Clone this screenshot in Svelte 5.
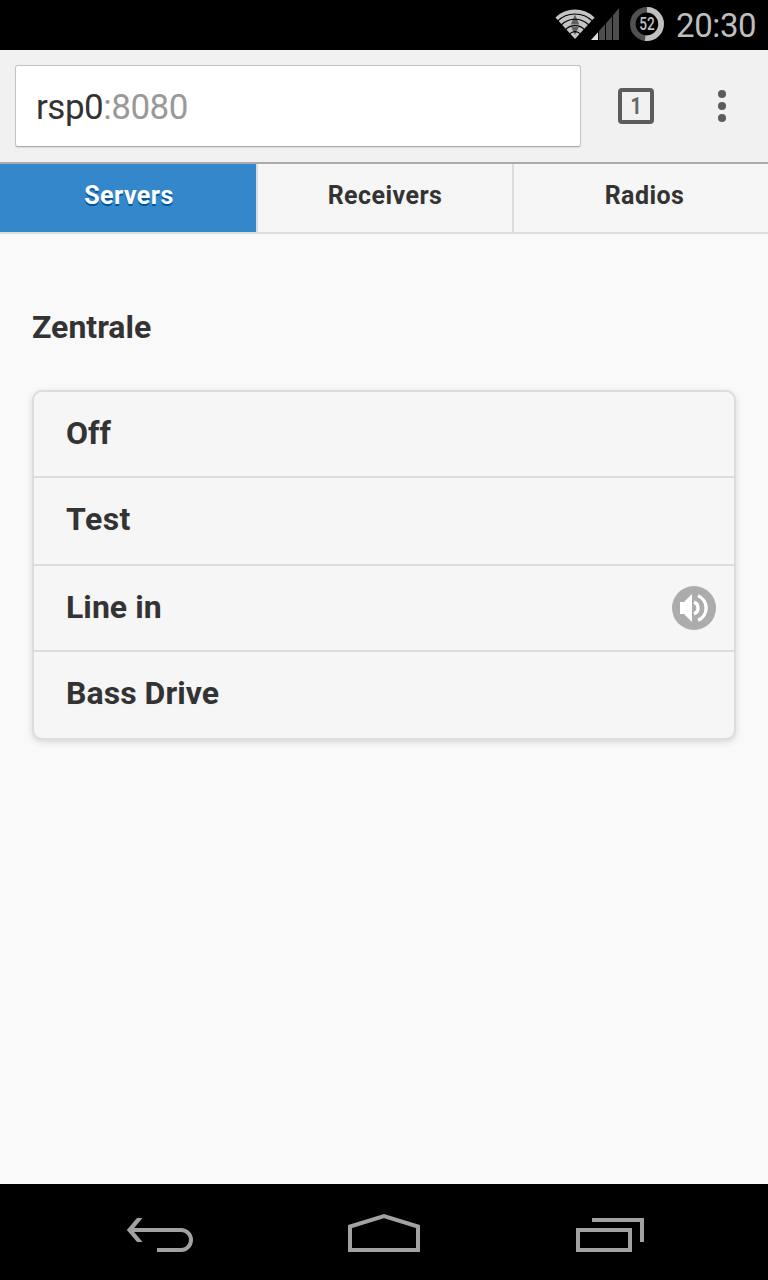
<script>
  const tabs = ['Servers', 'Receivers', 'Radios'];
  const sources = [
    { name: 'Off', height: 84 },
    { name: 'Test', height: 86 },
    { name: 'Line in', height: 84, playing: true },
    { name: 'Bass Drive', height: 86 }
  ];
</script>

<div class="screen">
  <header class="status">
    <svg class="wifi" width="40" height="32" viewBox="0 0 40 32">
      <path d="M0.4 9.4 A28.4 28.4 0 0 1 39.6 9.4 L20 31 Z" fill="#c4c4c4" />
      <path d="M20 6.5 L24.300 16.500 H15.700 Z M16.200 19 H23.800 L20 27 Z" fill="#606060" />
      <g fill="none" stroke="#000" stroke-width="1.1">
        <path d="M2.500 13.200 A25 25 0 0 1 37.500 13.200" />
        <path d="M6.100 17 A19.700 19.700 0 0 1 33.900 17" />
        <path d="M10.200 21.800 A13.600 13.600 0 0 1 29.800 21.800" />
        <path d="M14.500 26 A7.500 7.500 0 0 1 25.500 26" />
      </g>
    </svg>
    <svg class="signal" width="29" height="32" viewBox="0 0 29 32">
      <path d="M0 32 L7 24.2 V32 Z" fill="#e0e0e0" />
      <path d="M8 23 L14 16.3 V32 H8 Z M15 15.2 L21 8.5 V32 H15 Z M22 7.3 L28 0 V32 H22 Z" fill="#4d4d4d" />
    </svg>
    <div class="battery">
      <svg width="34" height="34" viewBox="0 0 34 34" fill="none" stroke-width="5.6">
        <circle cx="17" cy="17" r="14.2" stroke="#505050" />
        <path d="M17 2.8 A14.2 14.2 0 1 1 15.2 31.1" stroke="#c0c0c0" />
      </svg>
      <span>52</span>
    </div>
    <time>20:30</time>
  </header>

  <div class="toolbar">
    <div class="url"><b>rsp0</b>:8080</div>
    <button class="count"><span>1</span></button>
    <button class="menu" aria-label="Menu"><i></i><i></i><i></i></button>
  </div>

  <nav class="tabs">
    {#each tabs as tab, i}
      <button class:active={i === 0}>{tab}</button>
    {/each}
  </nav>

  <main>
    <h1>Zentrale</h1>
    <ul>
      {#each sources as source}
        <li style="height: {source.height}px">
          <span>{source.name}</span>
          {#if source.playing}
            <svg width="44" height="44" viewBox="0 0 44 44">
              <circle cx="22" cy="22" r="22" fill="#acacac" />
              <path d="M8 16 H12 L20 8 V36 L12 28 H8 Z" fill="#fff" />
              <g fill="none" stroke="#fff" stroke-width="3.4">
                <path d="M22 16.2 A6.200 6.200 0 0 1 22 27.800" />
                <path d="M26 9.8 A13.2 13.2 0 0 1 26 34.2" />
              </g>
            </svg>
          {/if}
        </li>
      {/each}
    </ul>
  </main>

  <footer>
    <svg width="768" height="96" viewBox="0 0 768 96" fill="none" stroke="#a2a2a2" stroke-width="4">
      <path d="M157 66 H181 A10 10 0 0 0 181 46 H131" />
      <path d="M142.500 34 H137 L126.800 46 L137 58 H142.500 L132.500 46 Z" fill="#a2a2a2" stroke="none" />
      <path d="M350 66 V42.500 L384 32.200 L418 42.500 V66 Z" />
      <path d="M578 46 H630 V66 H578 Z M592 36 H642 V58" />
    </svg>
  </footer>
</div>

<style>
  :global(body) { margin: 0; background: #f9f9f9; }
  .screen {
    width: 768px; height: 1280px; display: flex; flex-direction: column;
    overflow: hidden; background: #f9f9f9; color: #333;
    font-family: Roboto, sans-serif;
  }
  button { border: 0; padding: 0; background: none; font: inherit; color: inherit; }
  .status {
    height: 50px; flex: none; box-sizing: border-box; background: #000;
    display: flex; align-items: flex-start; color: #bebebe;
  }
  .wifi { margin: 8px 0 0 555px; flex: none; }
  .signal { margin: 8px 0 0 -4px; flex: none; }
  .battery { width: 34px; height: 34px; margin: 7px 0 0 10px; display: grid; flex: none; }
  .battery svg, .battery span { grid-area: 1 / 1; }
  .battery span { font: 500 18px/34px Roboto, sans-serif; transform: scaleX(.76); text-align: center; }
  time { font-size: 33px; line-height: 40px; margin: 6px 0 0 12px; font-weight: 400; letter-spacing: -.4px; }
  .toolbar {
    height: 114px; flex: none; box-sizing: border-box; display: flex; align-items: flex-start;
    background: #f1f1f1; border-bottom: 2px solid #aaa; padding: 15px 0 0 15px;
  }
  .url {
    width: 566px; height: 82px; box-sizing: border-box; border: 1px solid #c3c3c3;
    border-bottom-color: #aaa; border-radius: 3px; background: #fff; padding-left: 20px;
    font-size: 35px; line-height: 84px; letter-spacing: -.5px; color: #999; box-shadow: 0 1px 1px #ddd;
  }
  .url b { font-weight: 400; color: #333; }
  .count {
    width: 36px; height: 36px; box-sizing: border-box; border: 4px solid #5c5c5c; border-radius: 4px;
    margin: 23px 0 0 37px; font: 700 23px/30px Roboto, sans-serif; color: #666;
  }
  .count span { display: block; height: 28px; transform: scaleX(.85); }
  .menu { display: flex; flex-direction: column; gap: 4px; margin: 25px 0 0 64px; }
  .menu i { width: 8px; height: 8px; border-radius: 50%; background: #5c5c5c; }
  .tabs {
    height: 70px; flex: none; box-sizing: border-box; display: grid; grid-template-columns: 256px 256px 256px;
    border-bottom: 2px solid #ddd; background: #f6f6f6;
  }
  .tabs button {
    border-left: 2px solid #ddd; font-size: 25px; line-height: 30px; font-weight: 700; padding-bottom: 4px;
    letter-spacing: .45px; text-shadow: 0 2px 0 #f3f3f3;
  }
  .tabs .active { border-left: 0; padding-left: 2px; background: #38c; color: #fff; text-shadow: 0 2px 0 #059; }
  .tabs button:last-child { padding-left: 7px; }
  main { flex: 1; padding: 0 32px; }
  h1 { margin: 73px 0 43px; font-size: 32px; line-height: 40px; font-weight: 700; }
  ul {
    margin: 0; padding: 0; list-style: none; border: 2px solid #ddd; border-radius: 10px;
    background: #f6f6f6; box-shadow: 0 2px 6px rgba(0, 0, 0, .15);
  }
  li {
    display: flex; align-items: center; justify-content: space-between; padding: 0 18px 0 32px;
    font-size: 32px; font-weight: 700; text-shadow: 0 2px 0 #f3f3f3; letter-spacing: .05px;
  }
  li + li { border-top: 2px solid #ddd; }
  li span { margin-top: -2px; }
  li:nth-child(even) span { margin-top: -4px; }
  li:nth-child(2) span { letter-spacing: .5px; }
  li svg { flex: none; }
  footer { height: 96px; flex: none; background: #000; }
  footer svg { display: block; }
</style>
